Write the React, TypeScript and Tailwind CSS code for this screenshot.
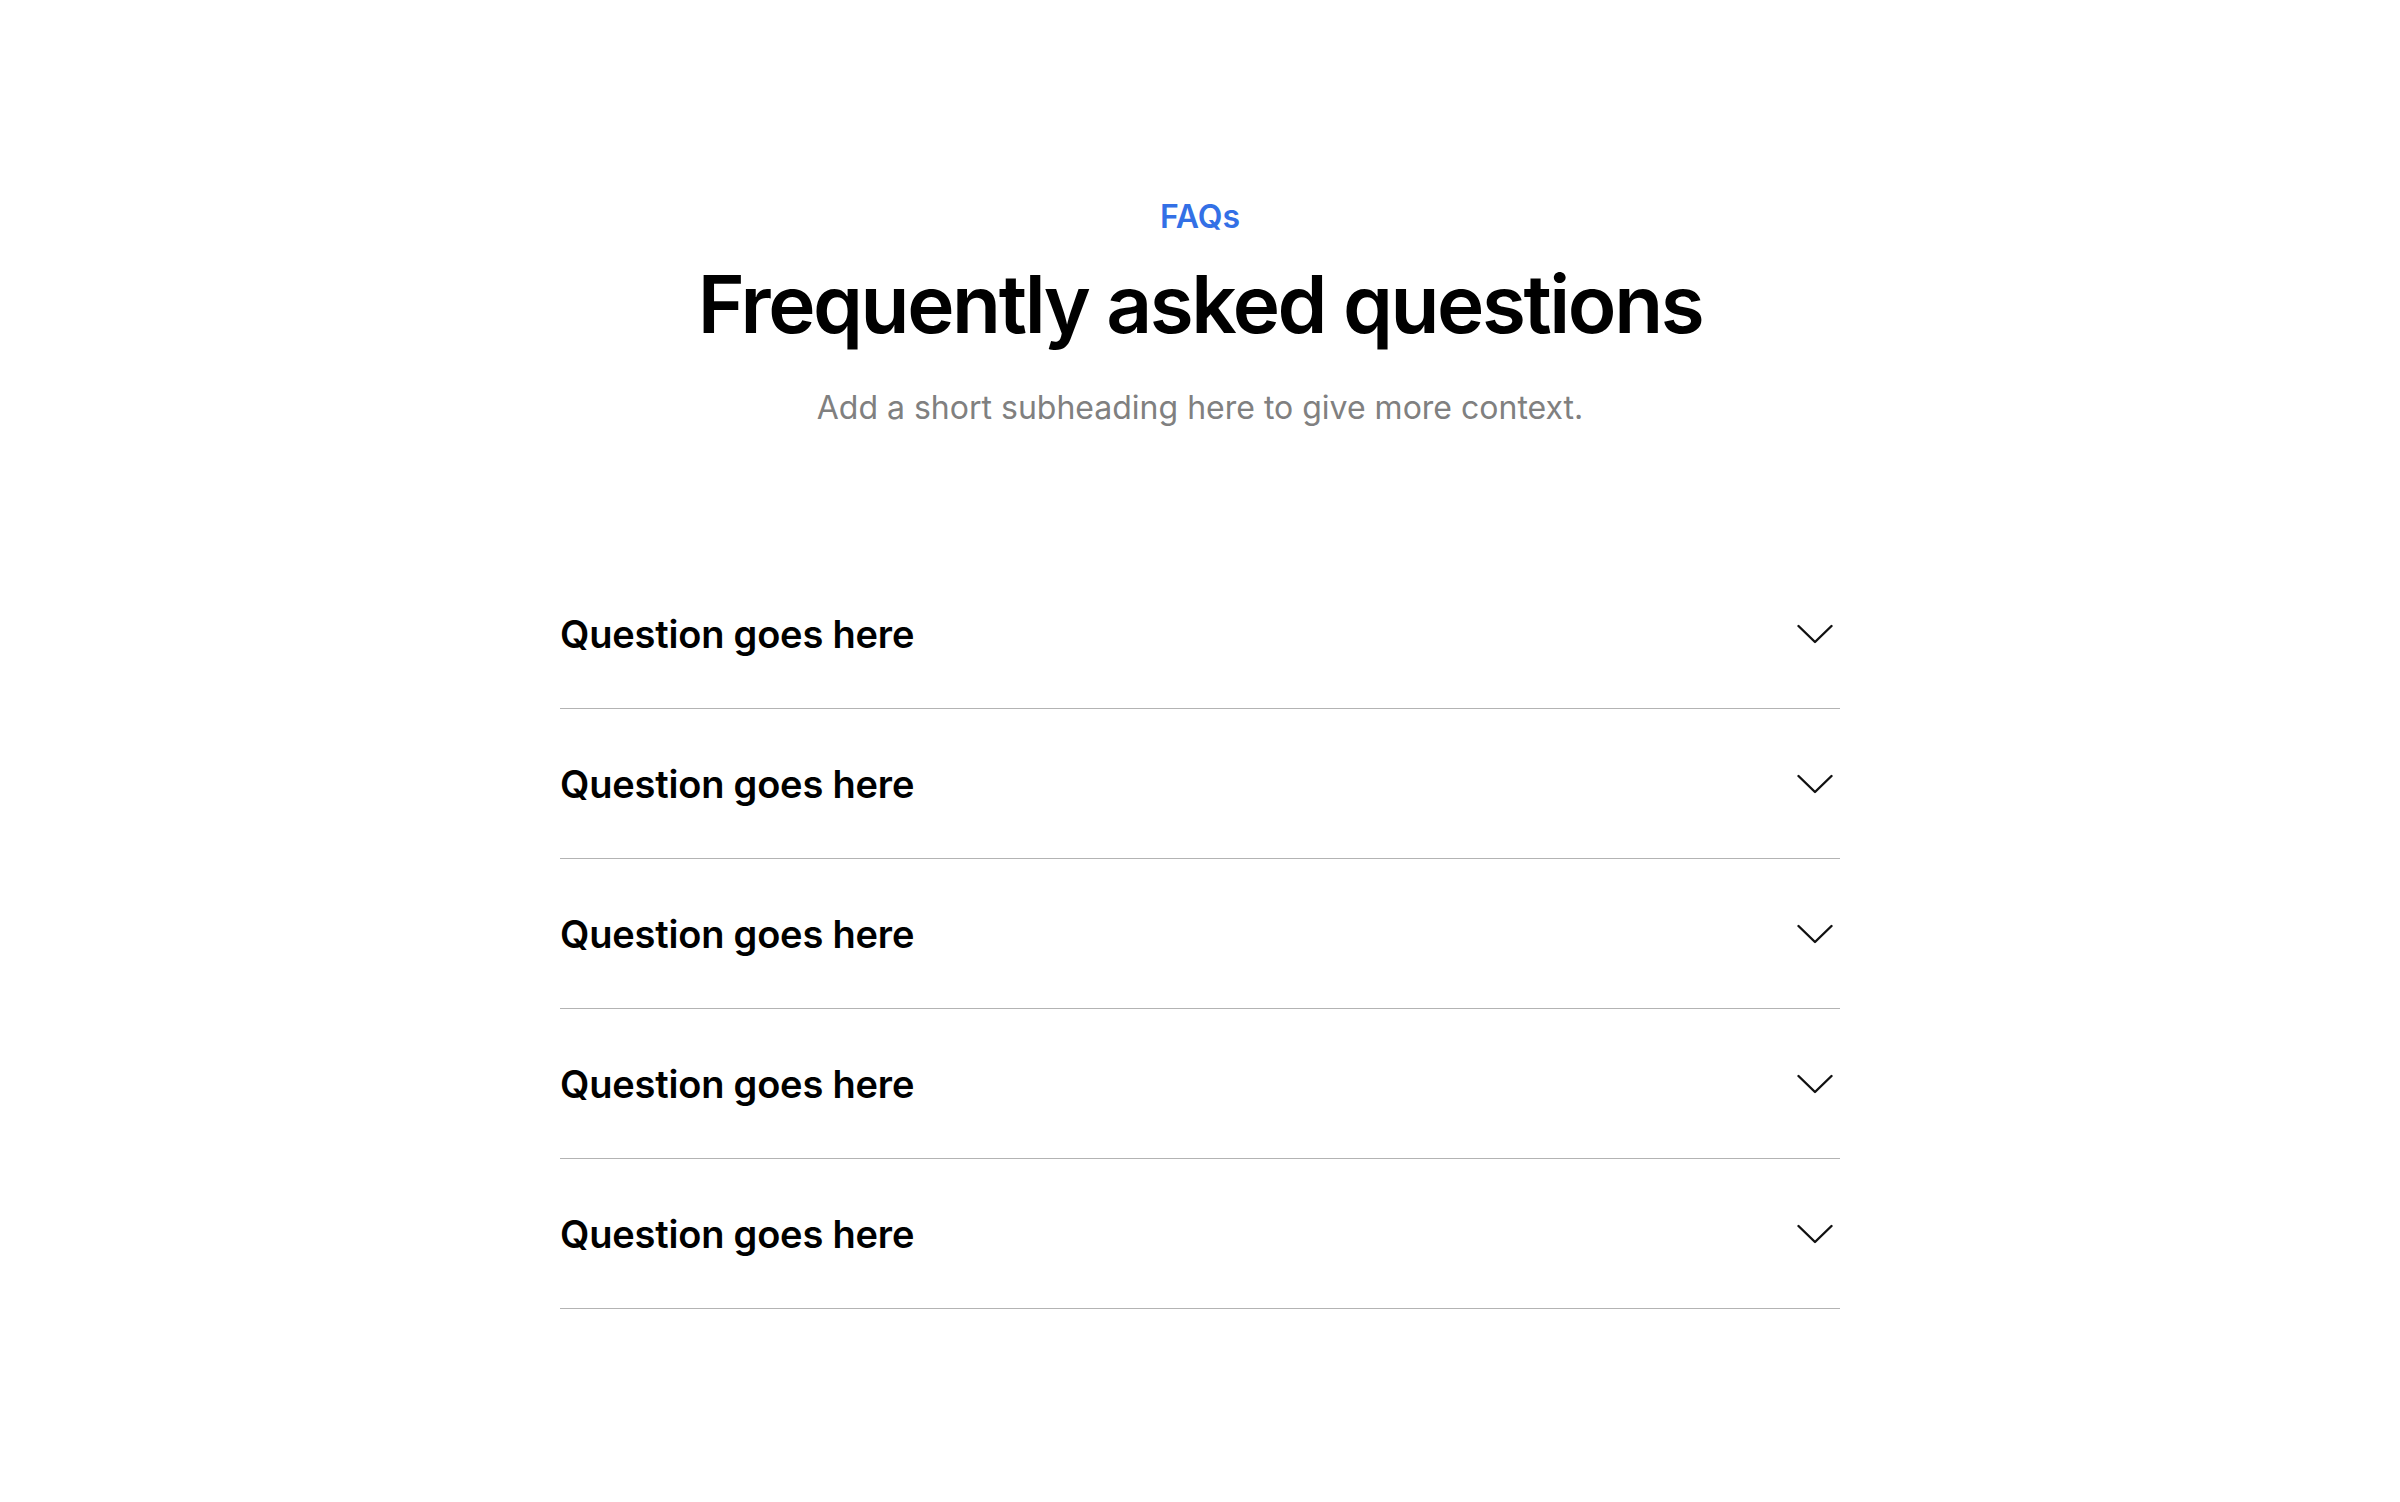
import React from "react";

const questions = [
  "Question goes here",
  "Question goes here",
  "Question goes here",
  "Question goes here",
  "Question goes here",
];

function Chevron() {
  return (
    <svg width="36" height="20" viewBox="0 0 36 20" fill="none" className="shrink-0">
      <polyline points="1.5,2 18,18 34.5,2" stroke="#111111" strokeWidth="2.4" strokeLinecap="round" strokeLinejoin="round" />
    </svg>
  );
}

export default function App() {
  return (
    <div className="min-h-screen w-full bg-white" style={{ fontFamily: "Inter, 'Noto Sans', sans-serif" }}>
      <div className="flex flex-col items-center pt-[198px]">
        <div className="text-[32px] leading-[38px] font-semibold text-[#3370e6]">FAQs</div>
        <h1 className="mt-[24px] text-[80px] leading-[88px] font-semibold tracking-[-0.03em] text-black">
          Frequently asked questions
        </h1>
        <p className="mt-[41px] text-[32px] leading-[38px] text-[#808080]">
          Add a short subheading here to give more context.
        </p>
      </div>
      <div className="mx-auto mt-[132px] w-[1280px]">
        {questions.map((q, i) => (
          <div key={i} className="flex h-[150px] items-center justify-between border-b border-[#b3b3b3] pr-[7px]">
            <span className="text-[38px] leading-[46px] font-semibold tracking-[-0.005em] text-black">{q}</span>
            <Chevron />
          </div>
        ))}
      </div>
    </div>
  );
}
